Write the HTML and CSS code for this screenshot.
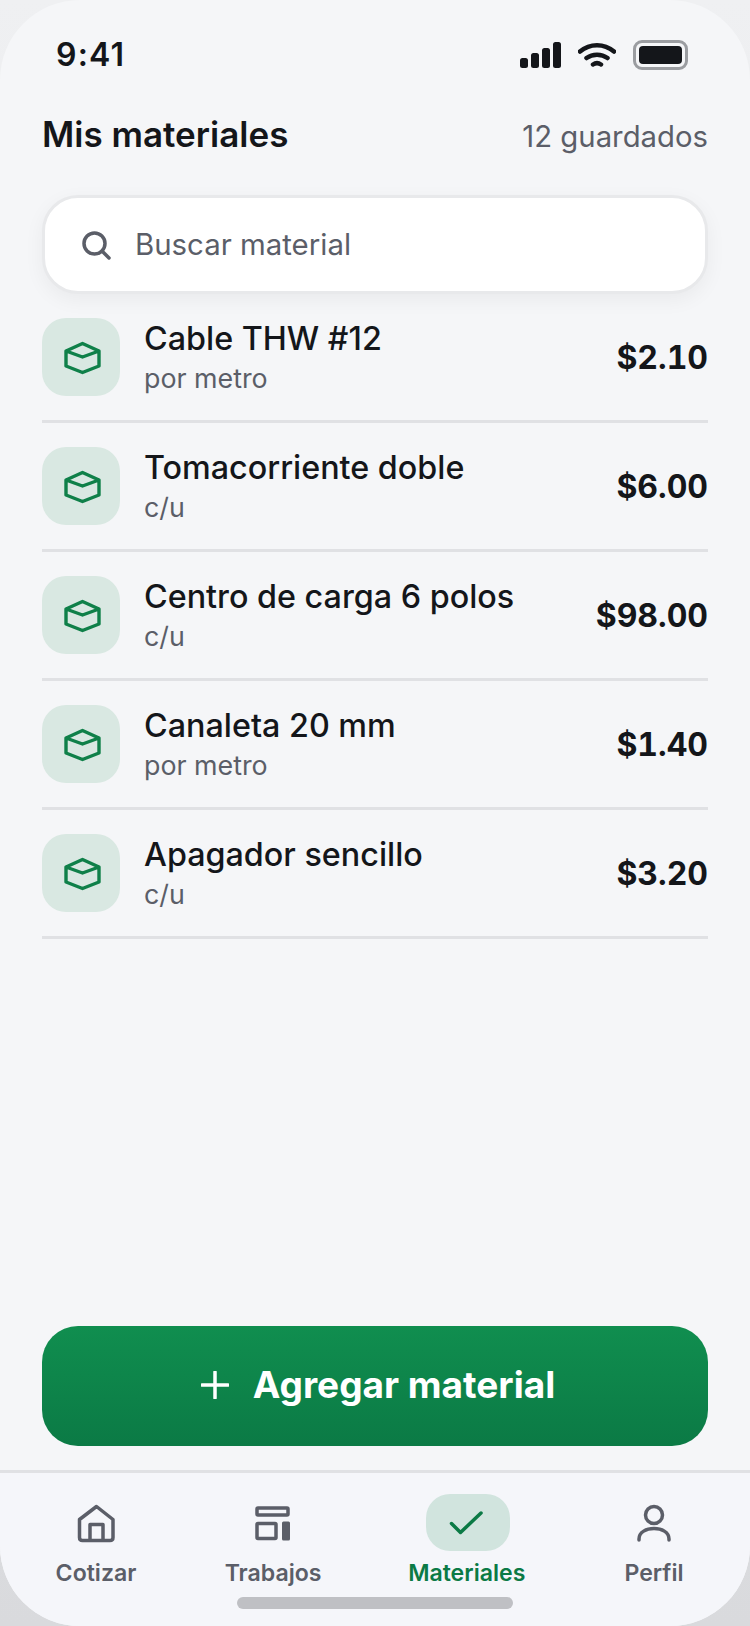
FILE: index.html
```html
<!DOCTYPE html>
<html lang="es">
<head>
<meta charset="utf-8">
<title>Mis materiales</title>
<link rel="stylesheet" href="styles.css">
</head>
<body>
<div class="phone">
  <div class="status">
    <span class="time">9:41</span>
    <div class="status-icons">
      <svg class="sig" viewBox="0 0 41 26" width="41" height="26"><rect x="0" y="16" width="8" height="10" rx="2.5"/><rect x="11" y="11" width="8" height="15" rx="2.5"/><rect x="22" y="6" width="8" height="20" rx="2.5"/><rect x="33" y="0" width="8" height="26" rx="2.5"/></svg>
      <svg class="wifi" viewBox="0 0 38 26" width="38" height="26"><path d="M2 9.500C12 1 26 1 36 9.500M8.500 16C14.500 11.500 23.500 11.500 29.500 16M15 22.500C17.500 20.800 20.500 20.800 23 22.500"/></svg>
      <div class="battery"><div class="battery-fill"></div></div>
    </div>
  </div>

  <div class="head">
    <h1 class="title">Mis materiales</h1>
    <span class="count">12 guardados</span>
  </div>

  <div class="search">
    <svg viewBox="0 0 30 30" width="30" height="30" class="search-icon"><circle cx="13.500" cy="13.500" r="10.500"/><path d="M21 21L28 28"/></svg>
    <span class="search-text">Buscar material</span>
  </div>

  <div class="list">
    <div class="row">
      <div class="tile"><svg class="box" viewBox="0 0 40 36"><path d="M21.500 4.500L38 12V27L21.500 33.500L5 27V12ZM5 12L21.500 18L38 12"/></svg></div>
      <div class="info"><div class="name">Cable THW #12</div><div class="unit">por metro</div></div>
      <div class="price">$2.10</div>
    </div>
    <div class="row">
      <div class="tile"><svg class="box" viewBox="0 0 40 36"><path d="M21.500 4.500L38 12V27L21.500 33.500L5 27V12ZM5 12L21.500 18L38 12"/></svg></div>
      <div class="info"><div class="name">Tomacorriente doble</div><div class="unit">c/u</div></div>
      <div class="price">$6.00</div>
    </div>
    <div class="row">
      <div class="tile"><svg class="box" viewBox="0 0 40 36"><path d="M21.500 4.500L38 12V27L21.500 33.500L5 27V12ZM5 12L21.500 18L38 12"/></svg></div>
      <div class="info"><div class="name">Centro de carga 6 polos</div><div class="unit">c/u</div></div>
      <div class="price">$98.00</div>
    </div>
    <div class="row">
      <div class="tile"><svg class="box" viewBox="0 0 40 36"><path d="M21.500 4.500L38 12V27L21.500 33.500L5 27V12ZM5 12L21.500 18L38 12"/></svg></div>
      <div class="info"><div class="name">Canaleta 20 mm</div><div class="unit">por metro</div></div>
      <div class="price">$1.40</div>
    </div>
    <div class="row">
      <div class="tile"><svg class="box" viewBox="0 0 40 36"><path d="M21.500 4.500L38 12V27L21.500 33.500L5 27V12ZM5 12L21.500 18L38 12"/></svg></div>
      <div class="info"><div class="name">Apagador sencillo</div><div class="unit">c/u</div></div>
      <div class="price">$3.20</div>
    </div>
  </div>

  <div class="action">
    <div class="add">
      <svg class="plus" viewBox="0 0 28 28" width="28" height="28"><path d="M14 1V27M1 14H27"/></svg>
      <span>Agregar material</span>
    </div>
  </div>

  <nav class="nav">
    <div class="tab">
      <div class="tab-icon"><svg viewBox="0 0 40 40" width="40" height="40" class="nav-svg"><path d="M3.500 16.500L20.500 3.500L37 16.500V34.500Q37 37.500 34 37.500H6.500Q3.500 37.500 3.500 34.500ZM14 37.500V21.500H27V37.500"/></svg></div>
      <span class="tab-label">Cotizar</span>
    </div>
    <div class="tab">
      <div class="tab-icon"><svg viewBox="0 0 40 40" width="40" height="40" class="nav-svg"><rect x="4" y="5" width="31" height="7" rx="1"/><rect x="4" y="20.500" width="19" height="15" rx="1"/><rect x="29" y="18.500" width="8" height="19" rx="1.500" class="solid"/></svg></div>
      <span class="tab-label">Trabajos</span>
    </div>
    <div class="tab tab-active">
      <div class="tab-icon"><svg viewBox="0 0 40 40" width="40" height="40" class="check"><path d="M3.500 20.500L12.500 29.500L33 10"/></svg></div>
      <span class="tab-label">Materiales</span>
    </div>
    <div class="tab">
      <div class="tab-icon"><svg viewBox="0 0 40 40" width="40" height="40" class="nav-svg"><circle cx="20" cy="12" r="8.500"/><path d="M5 37V36C5 22 35 22 35 36V37"/></svg></div>
      <span class="tab-label">Perfil</span>
    </div>
  </nav>
  <div class="home-wrap"><div class="home"></div></div>
</div>
</body>
</html>
```
FILE: styles.css
```css
* { box-sizing: border-box; }
html, body { margin: 0; padding: 0; }
body {
  width: 750px;
  height: 1626px;
  overflow: hidden;
  background: linear-gradient(180deg, #eff0f2 0%, #d9dadd 100%);
  font-family: Inter, "Liberation Sans", sans-serif;
  color: #14161a;
}
.phone {
  width: 750px;
  height: 1626px;
  border-radius: 80px;
  background: #f5f6f8;
  overflow: hidden;
  display: flex;
  flex-direction: column;
}
.status {
  display: flex;
  justify-content: space-between;
  align-items: center;
  height: 110px;
  padding: 0 62px 0 56px;
}
.time {
  font-size: 32px;
  font-weight: 600;
  letter-spacing: 1.2px;
  margin-bottom: 2px;
}
.status-icons { display: flex; align-items: center; gap: 17px; }
.sig { fill: #14161a; }
.wifi { fill: none; stroke: #14161a; stroke-width: 4.500; stroke-linecap: round; }
.battery {
  width: 55px;
  height: 30px;
  border: 3px solid #9b9da1;
  border-radius: 9px;
  padding: 3px;
}
.battery-fill { width: 100%; height: 100%; background: #14161a; border-radius: 4px; }
.head {
  display: flex;
  justify-content: space-between;
  align-items: baseline;
  padding: 3px 42px 0;
  height: 85px;
}
.title { margin: 0; font-size: 35px; font-weight: 600; }
.count { font-size: 29.3px; color: #5b5e68; }
.search {
  margin: 0 42px;
  height: 99px;
  background: #fff;
  border: 3px solid #e8e9eb;
  border-radius: 36px;
  box-shadow: 0 6px 20px rgba(20, 22, 26, 0.05);
  display: flex;
  align-items: center;
  gap: 24px;
  padding-left: 36px;
}
.search-icon { fill: none; stroke: #5b5e68; stroke-width: 3.500; stroke-linecap: round; }
.search-text { font-size: 29.4px; color: #5b5e68; }
.list { padding: 24px 42px 0; flex: 1; }
.row {
  display: flex;
  align-items: center;
  padding: 24px 0;
  border-bottom: 3px solid #e0e1e4;
}
.row:first-child { padding-top: 0; }
.tile {
  width: 78px;
  height: 78px;
  flex: none;
  border-radius: 24px;
  background: #d9e8e2;
  display: flex;
  align-items: center;
  justify-content: center;
}
.box { width: 40px; height: 36px; fill: none; stroke: #0f8049; stroke-width: 3.400; stroke-linejoin: round; }
.info { flex: 1; margin-left: 24px; }
.name { font-size: 32.3px; font-weight: 500; line-height: 42px; }
.unit { font-size: 26.8px; line-height: 36px; color: #5b5e68; }
.price { font-size: 32px; font-weight: 700; font-variant-numeric: tabular-nums; }
.action { padding: 0 42px 24px; }
.add {
  height: 120px;
  padding: 0 0 3px 6px;
  border-radius: 36px;
  background: linear-gradient(180deg, #108e4f 0%, #0b7a45 100%);
  color: #fff;
  font-size: 37px;
  font-weight: 700;
  display: flex;
  align-items: center;
  justify-content: center;
  gap: 24px;
}
.plus { fill: none; stroke: #fff; stroke-width: 3.500; stroke-linecap: round; }
.nav {
  border-top: 3px solid #e0e1e4;
  background: #f5f6fa;
  height: 127px;
  padding: 21px 54px 0;
  display: flex;
  justify-content: space-between;
}
.tab {
  display: flex;
  flex-direction: column;
  align-items: center;
  min-width: 84px;
}
.tab-icon {
  width: 84px;
  height: 57px;
  display: flex;
  align-items: center;
  justify-content: center;
  border-radius: 24px;
}
.tab-label { font-size: 23.1px; font-weight: 600; color: #5b5e68; margin-top: 8px; line-height: 28px; }
.nav-svg { fill: none; stroke: #5b5e68; stroke-width: 3.500; stroke-linejoin: round; stroke-linecap: round; }
.nav-svg .solid { fill: #5b5e68; stroke: none; }
.tab-active .tab-icon { background: #d1e4de; margin-left: 2px; }
.tab-active .tab-label { color: #0b7a45; }
.check { fill: none; stroke: #0b7a45; stroke-width: 3.500; stroke-linecap: round; stroke-linejoin: round; }
.home-wrap { background: #f5f6fa; height: 29px; display: flex; justify-content: center; }
.home { width: 276px; height: 12px; border-radius: 6px; background: #bfc0c4; }
```
